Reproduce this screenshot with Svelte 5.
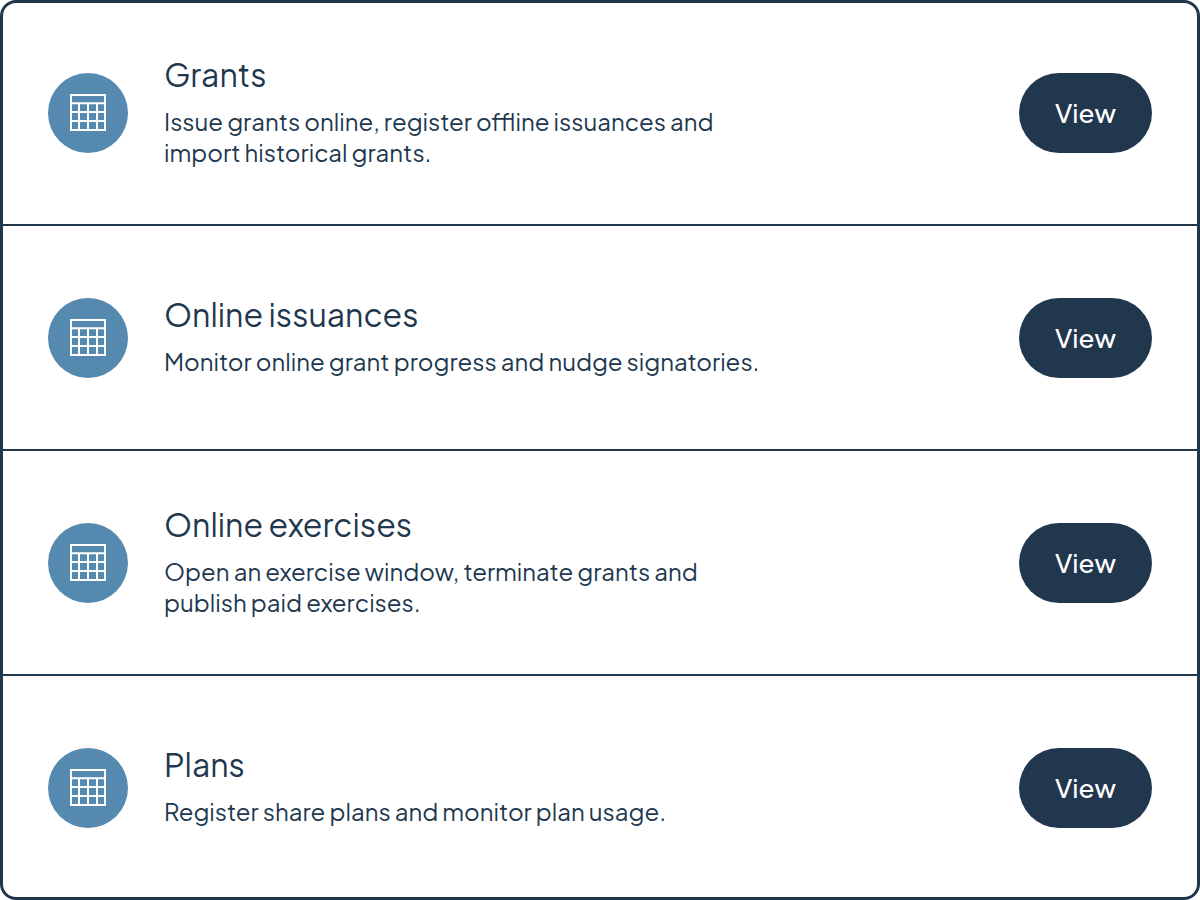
<script>
  const sections = [
    { title: 'Grants', text: 'Issue grants online, register offline issuances and import historical grants.' },
    { title: 'Online issuances', text: 'Monitor online grant progress and nudge signatories.' },
    { title: 'Online exercises', text: 'Open an exercise window, terminate grants and publish paid exercises.' },
    { title: 'Plans', text: 'Register share plans and monitor plan usage.' }
  ];
</script>

<main class="card">
  {#each sections as section}
    <section class="row">
      <span class="badge">
        <svg width="36" height="37" viewBox="0 0 36 37" fill="none" stroke="#fff" stroke-width="2" aria-hidden="true">
          <path d="M1 1H35V36H1ZM1 9.3H35M1 18H35M1 27H35M9 9V36M18 9V36M27 9V36" />
        </svg>
      </span>
      <div class="copy">
        <h2>{section.title}</h2>
        <p>{section.text}</p>
      </div>
      <button type="button" aria-label="View {section.title}">View</button>
    </section>
  {/each}
</main>

<style>
  :global(body) {
    margin: 0;
    background: #fff;
  }

  .card {
    box-sizing: border-box;
    display: flex;
    flex-direction: column;
    min-height: 100vh;
    padding: 1px 0;
    border-radius: 16px;
    box-shadow: inset 0 0 0 3px #21374e;
    color: #21374e;
    font-family: 'Plus Jakarta Sans', Inter, sans-serif;
    font-weight: 400;
  }

  .row {
    flex: 1 1 0;
    display: flex;
    align-items: center;
    padding: 0 48px;
  }

  .row + .row {
    border-top: 2px solid #21374e;
  }

  .badge {
    flex: none;
    display: flex;
    align-items: center;
    justify-content: center;
    width: 80px;
    height: 80px;
    border-radius: 50%;
    background: #5589af;
  }

  .copy {
    flex: 0 1 600px;
    margin: 0 36px;
  }

  h2 {
    margin: 0 0 16px;
    font-size: 32px;
    line-height: 32px;
    font-weight: 400;
  }

  p {
    margin: 0;
    font-size: 24px;
    line-height: 31px;
  }

  button {
    flex: none;
    width: 133px;
    height: 80px;
    margin-left: auto;
    padding: 0;
    border: 0;
    border-radius: 40px;
    background: #21374e;
    color: #fff;
    font: inherit;
    font-size: 26px;
    font-weight: 500;
    cursor: pointer;
  }
</style>
